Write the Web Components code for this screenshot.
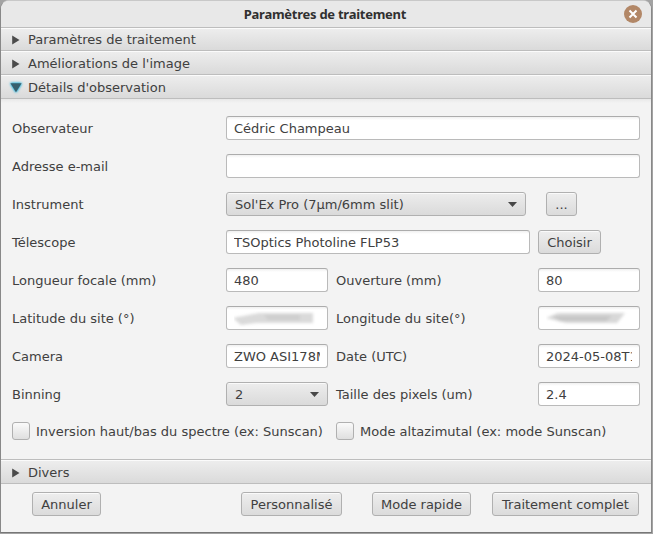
<!DOCTYPE html>
<html lang="fr">
<head>
<meta charset="utf-8">
<title>Paramètres de traitement</title>
<style>
html, body { margin: 0; height: 100%; }
body { background: #a3a3a3; font: 13px/16px "DejaVu Sans", sans-serif; color: #404040; overflow: hidden; }
.r3 { grid-column: span 3; }
.r2 { grid-column: span 2; }
fx-form > span { padding-top: 2px; }
</style>
</head>
<body>
<fx-window heading="Paramètres de traitement">
  <fx-section first>Paramètres de traitement</fx-section>
  <fx-section>Améliorations de l'image</fx-section>
  <fx-section open>Détails d'observation</fx-section>
  <fx-form>
    <span>Observateur</span><fx-field class="r3">Cédric Champeau</fx-field>
    <span>Adresse e-mail</span><fx-field class="r3"></fx-field>
    <span>Instrument</span><fx-combo class="r2" style="width:300px">Sol'Ex Pro (7µm/6mm slit)</fx-combo><fx-button style="margin-left:8px;width:31px">...</fx-button>
    <span>Télescope</span><fx-field class="r2">TSOptics Photoline FLP53</fx-field><fx-button style="width:63px">Choisir</fx-button>
    <span>Longueur focale (mm)</span><fx-field>480</fx-field><span>Ouverture (mm)</span><fx-field>80</fx-field>
    <span>Latitude du site (°)</span><fx-field><fx-smudge></fx-smudge></fx-field><span>Longitude du site(°)</span><fx-field><fx-smudge wide></fx-smudge></fx-field>
    <span>Camera</span><fx-field>ZWO ASI178MM</fx-field><span>Date (UTC)</span><fx-field>2024-05-08T12</fx-field>
    <span>Binning</span><fx-combo>2</fx-combo><span>Taille des pixels (um)</span><fx-field>2.4</fx-field>
    <fx-check class="r2">Inversion haut/bas du spectre (ex: Sunscan)</fx-check><fx-check class="r2">Mode altazimutal (ex: mode Sunscan)</fx-check>
  </fx-form>
  <fx-section last>Divers</fx-section>
  <fx-actions>
    <fx-button style="width:69px;margin-right:auto">Annuler</fx-button>
    <fx-button style="width:101px">Personnalisé</fx-button>
    <fx-button style="width:99px">Mode rapide</fx-button>
    <fx-button style="width:147px;margin-left:-9px">Traitement complet</fx-button>
  </fx-actions>
</fx-window>
<script>
const define = (name, html) => customElements.define(name, class extends HTMLElement {
  constructor() {
    super();
    const t = document.createElement('template');
    t.innerHTML = html;
    this.attachShadow({ mode: 'open' }).append(t.content.cloneNode(true));
    const heading = this.shadowRoot.querySelector('h1');
    if (heading) heading.textContent = this.getAttribute('heading');
  }
});

define('fx-window', `<style>
:host { display: flex; flex-direction: column; box-sizing: border-box; width: 652px; height: 533px;
  border: 1px solid #888; border-bottom-color: #777; border-top-color: #c8c8c8; border-radius: 9px 9px 0 0; background: #f3f3f3; overflow: hidden; }
header { display: grid; grid-template-columns: 26px 1fr 24px; align-items: center; box-sizing: border-box; height: 27px; padding: 0 4px 1px 4px; background: #e8e8e8; border-bottom: 1px solid #bdbdbd; flex: none; }
h1 { grid-column: 2; margin: 0; padding-right: 4px; text-align: center; font: bold 13px/24px "Noto Sans", sans-serif; letter-spacing: -0.26px; color: #303030; white-space: nowrap; }
svg { display: block; }
</style>
<header><h1></h1><svg width="20" height="20" viewBox="0 0 20 20"><circle cx="10" cy="10" r="9" fill="#b28767"/><path d="M6.500 6.500l7 7M13.500 6.500l-7 7" stroke="#fff" stroke-width="2"/></svg></header>
<slot></slot>`);

define('fx-section', `<style>
:host { display: flex; align-items: center; box-sizing: border-box; height: 24px; flex: none; padding: 2px 10px 0 9px; gap: 4px;
  border-bottom: 1px solid #bdbdbd; background: linear-gradient(#fbfbfb 0 1px, #ededed 1px, #dadada); }
:host([first]) { height: 23px; }
:host([last]) { height: 25px; padding-top: 3px; border-top: 1px solid #bdbdbd; }
:host([open]) .c, .o { display: none; }
:host([open]) .o { display: block; }
svg { width: 14px; height: 16px; flex: none; overflow: visible; }
.o { filter: drop-shadow(0 0 1px #18a5d0) drop-shadow(0 0 1px #55c8e8); }
</style>
<svg class="c" viewBox="0 0 14 16"><path d="M2.200 3.500v9l7.300-4.500z" fill="#4b4b4b"/></svg>
<svg class="o" viewBox="0 0 14 16"><path d="M.4 3.300h11.200L6 12.300z" fill="#38606e"/></svg>
<span><slot></slot></span>`);

define('fx-form', `<style>
:host { display: grid; grid-template-columns: 206px 102px 194px 102px; grid-template-rows: repeat(8, 24px) 18px; column-gap: 8px; row-gap: 14px;
  align-items: center; box-sizing: border-box; height: 360px; flex: none; padding: 17px 11px 0; align-content: start; white-space: nowrap;
  background: linear-gradient(#e8e8e8, #f3f3f3 4px); }
</style><slot></slot>`);

define('fx-field', `<style>
:host { display: flex; align-items: center; box-sizing: border-box; height: 24px; padding: 2px 7px 0; border: 1px solid #bababa; border-top-color: #acacac; border-radius: 3px;
  background: linear-gradient(#f0f0f0, #fff 3px); min-width: 0; }
div { flex: 1; overflow: hidden; white-space: nowrap; }
</style><div><slot></slot></div>`);

define('fx-combo', `<style>
:host { display: flex; align-items: center; justify-content: space-between; box-sizing: border-box; height: 24px; padding: 0 8px; border: 1px solid #b0b0b0; border-radius: 3px;
  background: linear-gradient(#fafafa 0 1px, #ececec 1px, #dadada); }
span { padding-top: 2px; }
</style><span><slot></slot></span><svg width="9" height="5" viewBox="0 0 9 5"><path d="M0 0h9L4.500 5z" fill="#474747"/></svg>`);

define('fx-button', `<style>
:host { display: flex; align-items: center; justify-content: center; box-sizing: border-box; height: 24px; padding-top: 2px; border: 1px solid #b0b0b0; border-radius: 3px; white-space: nowrap; flex: none;
  background: linear-gradient(#fafafa 0 1px, #ededed 1px, #dbdbdb); }
</style><span><slot></slot></span>`);

define('fx-check', `<style>
:host { display: flex; align-items: center; gap: 6px; white-space: nowrap; padding-top: 4px; }
i { box-sizing: border-box; width: 18px; height: 18px; border: 1px solid #b0b0b0; border-radius: 3px; background: linear-gradient(#fafafa, #dfdfdf); flex: none; }
span { padding-top: 2px; }
</style><i></i><span><slot></slot></span>`);

define('fx-smudge', `<style>
:host { display: block; height: 16px; }
svg { display: block; filter: blur(1.600px); }
.w { display: none; }
:host([wide]) .n { display: none; }
:host([wide]) .w { display: inline; }
</style><svg width="88" height="16" viewBox="0 0 88 16">
<g class="n"><path d="M-1 7L25 2H79V12H22L7 14z" fill="#dadada"/><path d="M30 4H66V9H34z" fill="#cecece"/></g>
<g class="w"><path d="M0 7L12 2H79L71 12H20z" fill="#d8d8d8"/><path d="M6 5H66L60 10H14z" fill="#c6c6c6"/></g>
</svg>`);

define('fx-actions', `<style>
:host { display: flex; gap: 30px; padding: 8px 12px 0 31px; }
</style><slot></slot>`);
</script>
</body>
</html>
